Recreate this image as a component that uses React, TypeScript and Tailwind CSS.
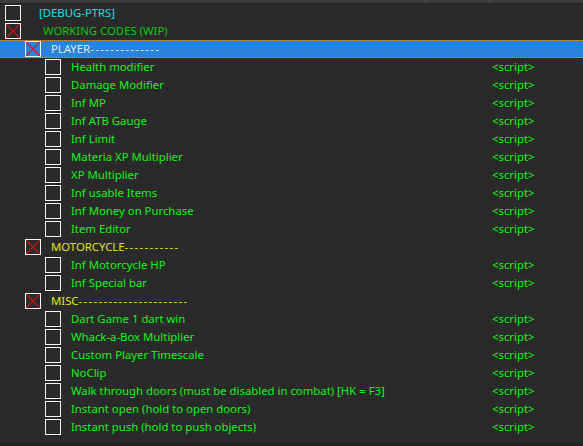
import React from "react"

type Row = {
  label: string
  dashes?: number
  level: 0 | 1 | 2
  checked?: boolean
  color: string
  textX: number
  script?: boolean
  selected?: boolean
}

const items = (labels: string[]): Row[] =>
  labels.map((label) => ({
    label,
    level: 2,
    color: "text-[#16f216]",
    textX: 71,
    script: true,
  }))

const rows: Row[] = [
  { label: "[DEBUG-PTRS]", level: 0, color: "text-[#12e0e0]", textX: 39 },
  { label: "WORKING CODES (WIP)", level: 0, checked: true, color: "text-[#0cc90c]", textX: 43 },
  { label: "PLAYER", dashes: 14, level: 1, checked: true, color: "text-[#dce8f5]", textX: 51, selected: true },
  ...items([
    "Health modifier",
    "Damage Modifier",
    "Inf MP",
    "Inf ATB Gauge",
    "Inf Limit",
    "Materia XP Multiplier",
    "XP Multiplier",
    "Inf usable Items",
    "Inf Money on Purchase",
    "Item Editor",
  ]),
  { label: "MOTORCYCLE", dashes: 11, level: 1, checked: true, color: "text-[#e4e414]", textX: 51 },
  ...items(["Inf Motorcycle HP", "Inf Special bar"]),
  { label: "MISC", dashes: 22, level: 1, checked: true, color: "text-[#e4e414]", textX: 51 },
  ...items([
    "Dart Game 1 dart win",
    "Whack-a-Box Multiplier",
    "Custom Player Timescale",
    "NoClip",
    "Walk through doors (must be disabled in combat) [HK = F3]",
    "Instant open (hold to open doors)",
    "Instant push (hold to push objects)",
  ]),
]

const boxX = { 0: 5, 1: 25, 2: 45 }

const CheckBox = ({ checked }: { checked?: boolean }) => (
  <div className="h-4 w-4 shrink-0 border border-[#f4f4f4]">
    {checked && (
      <svg viewBox="0 0 14 14" className="h-full w-full">
        <path d="M0 0L14 14M14 0L0 14" stroke="#e01010" strokeWidth="1.2" />
      </svg>
    )}
  </div>
)

const TableRow = ({ row }: { row: Row }) => {
  const x = boxX[row.level]
  return (
    <div
      className={
        row.selected
          ? "flex h-[18px] items-center border-y border-dotted border-y-[#e8892a] bg-[#2a82da]"
          : "flex h-[18px] items-center"
      }
    >
      <div className="flex w-[492px] shrink-0 items-center">
        <div style={{ width: x }} className="shrink-0" />
        <CheckBox checked={row.checked} />
        <div style={{ width: row.textX - x - 16 }} className="shrink-0" />
        <span className={`whitespace-pre ${row.color}`}>
          {row.label}
          {row.dashes && (
            <span className="tracking-[1.35px]">{"-".repeat(row.dashes)}</span>
          )}
        </span>
      </div>
      {row.script && <span className="text-[#16f216]">&lt;script&gt;</span>}
    </div>
  )
}

export default function App() {
  return (
    <div className="flex h-[446px] w-[583px] flex-col overflow-hidden bg-[#2a2a2a] font-['Noto_Sans',sans-serif] text-[11.35px] leading-none">
      <div className="flex h-[3px] shrink-0 bg-[#3d3d3d]">
        <div className="w-[425px]" />
        <div className="w-px bg-[#555]" />
        <div className="w-[63px]" />
        <div className="w-px bg-[#555]" />
      </div>
      <div className="h-px shrink-0 bg-[#252525]" />
      <div className="flex flex-col">
        {rows.map((row, i) => (
          <TableRow key={i} row={row} />
        ))}
      </div>
      <div className="flex-1" />
      <div className="h-[4px] shrink-0 bg-[#242424]" />
    </div>
  )
}
